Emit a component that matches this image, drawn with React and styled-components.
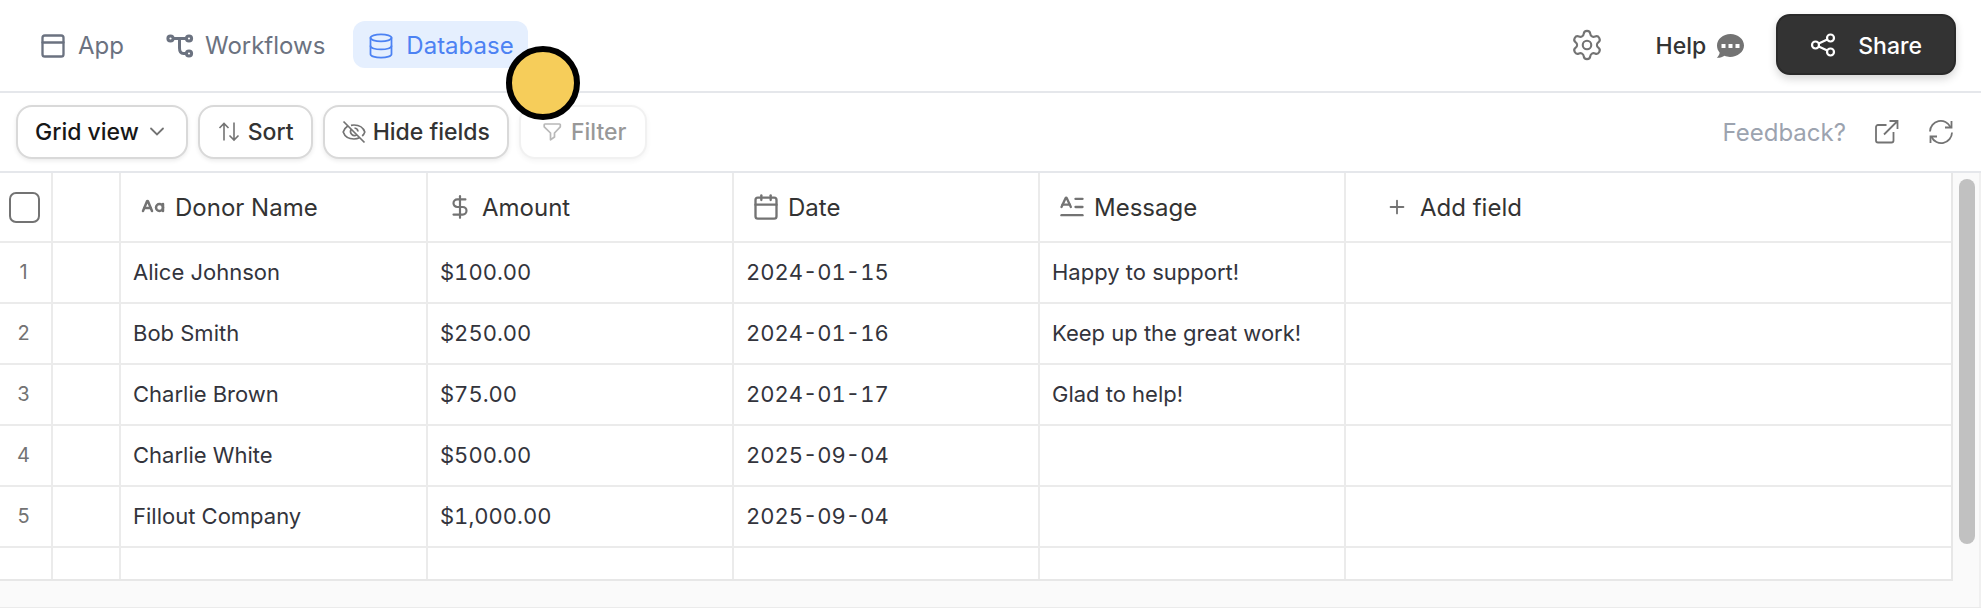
import React, { useState } from 'react';
import styled, { createGlobalStyle, css } from 'styled-components';
import {
  Calendar,
  CaseSensitive,
  Database,
  DollarSign,
  PanelTop,
  Plus,
  Settings,
  TextInitial,
} from 'lucide-react';

const donations = [
  { name: 'Alice Johnson', amount: '$100.00', date: '2024-01-15', message: 'Happy to support!' },
  { name: 'Bob Smith', amount: '$250.00', date: '2024-01-16', message: 'Keep up the great work!' },
  { name: 'Charlie Brown', amount: '$75.00', date: '2024-01-17', message: 'Glad to help!' },
  { name: 'Charlie White', amount: '$500.00', date: '2025-09-04', message: '' },
  { name: 'Fillout Company', amount: '$1,000.00', date: '2025-09-04', message: '' },
];

const fields = [
  { label: 'Donor Name', icon: <CaseSensitive size={24} strokeWidth={2.5} /> },
  { label: 'Amount', icon: <DollarSign size={26} strokeWidth={2} /> },
  { label: 'Date', icon: <Calendar size={28} strokeWidth={2} /> },
  { label: 'Message', icon: <TextInitial size={28} strokeWidth={2} /> },
];

export default function App() {
  const [allSelected, setAllSelected] = useState(false);

  return (
    <Page>
      <GlobalStyle />
      <Header>
        <Tabs>
          <Tab href="#app">
            <PanelTop size={28} strokeWidth={2} />
            App
          </Tab>
          <Tab href="#workflows">
            <WorkflowIcon />
            Workflows
          </Tab>
          <Tab href="#database" $active aria-current="page">
            <Database size={28} strokeWidth={1.5} />
            Database
            <Pointer />
          </Tab>
        </Tabs>
        <HeaderActions>
          <IconButton aria-label="Settings">
            <Settings size={34} strokeWidth={1.5} />
          </IconButton>
          <HelpButton>
            Help
            <ChatIcon />
          </HelpButton>
          <ShareButton>
            <ShareIcon />
            Share
          </ShareButton>
        </HeaderActions>
      </Header>

      <Toolbar>
        <ToolGroup>
          <ToolButton $strong>
            Grid view
            <ChevronIcon />
          </ToolButton>
          <ToolButton>
            <SortIcon />
            Sort
          </ToolButton>
          <ToolButton>
            <HideIcon />
            Hide fields
          </ToolButton>
          <ToolButton disabled>
            <FilterIcon />
            Filter
          </ToolButton>
        </ToolGroup>
        <ToolLinks>
          <FeedbackLink href="#feedback">Feedback?</FeedbackLink>
          <IconButton aria-label="Open in new tab">
            <ExternalIcon />
          </IconButton>
          <IconButton aria-label="Refresh">
            <RefreshIcon />
          </IconButton>
        </ToolLinks>
      </Toolbar>

      <GridArea>
        <Table>
          <colgroup>
            <Col $width={53} />
            <Col $width={68} />
            <Col $width={307} />
            <Col $width={306} />
            <Col $width={306} />
            <Col $width={306} />
            <Col />
          </colgroup>
          <thead>
            <HeadRow>
              <HeadCell>
                <Checkbox
                  type="checkbox"
                  aria-label="Select all rows"
                  checked={allSelected}
                  onChange={() => setAllSelected(!allSelected)}
                />
              </HeadCell>
              <HeadCell />
              {fields.map((field) => (
                <HeadCell key={field.label} scope="col">
                  <FieldLabel>
                    <FieldIcon>{field.icon}</FieldIcon>
                    {field.label}
                  </FieldLabel>
                </HeadCell>
              ))}
              <HeadCell>
                <AddField>
                  <Plus size={22} strokeWidth={2} />
                  Add field
                </AddField>
              </HeadCell>
            </HeadRow>
          </thead>
          <tbody>
            {donations.map((row, index) => (
              <Row key={row.name}>
                <NumberCell>{index + 1}</NumberCell>
                <Cell />
                <Cell>{row.name}</Cell>
                <Cell $tabular>{row.amount}</Cell>
                <Cell $tabular>{row.date}</Cell>
                <Cell>{row.message}</Cell>
                <Cell />
              </Row>
            ))}
            <FillerRow>
              <Cell />
              <Cell />
              <Cell />
              <Cell />
              <Cell />
              <Cell />
              <Cell />
            </FillerRow>
          </tbody>
        </Table>
        <ScrollTrack>
          <ScrollThumb />
        </ScrollTrack>
      </GridArea>
    </Page>
  );
}

function WorkflowIcon() {
  return (
    <svg width="28" height="28" viewBox="0 0 28 28" fill="none" stroke="currentColor" strokeWidth="3">
      <circle cx="4.5" cy="6.5" r="2.6" />
      <circle cx="23" cy="6.5" r="2.6" />
      <circle cx="23" cy="21.5" r="2.6" />
      <path d="M7 6.5h13.500M13.500 6.500v9.500c0 3.500 1.500 5.500 4 5.500h2.500" />
    </svg>
  );
}

function ChatIcon() {
  return (
    <svg width="28" height="26" viewBox="0 0 28 26">
      <path
        fill="#737373"
        d="M14.500 1C7 1 1 6.200 1 12.500c0 2.800 1 5.200 2.700 7.200C3.300 21.800 2.200 23.500.8 24.800c3 .2 5.700-.7 7.700-2 1.700.7 3.500 1.200 5.500 1.200 7.500 0 14-5.200 14-11.500S22 1 14.500 1z"
      />
      <path fill="#fff" d="M5.500 11h4v4h-4zM12.500 11h4v4h-4zM19.500 11h4v4h-4z" />
    </svg>
  );
}

function ShareIcon() {
  return (
    <svg width="26" height="26" viewBox="0 0 26 26" fill="none" stroke="currentColor" strokeWidth="2.2">
      <circle cx="5.5" cy="12" r="3.5" />
      <circle cx="20.5" cy="5" r="3.5" />
      <circle cx="20.5" cy="19" r="3.5" />
      <path d="M8.700 10.500l8.600-4M8.700 13.500l8.600 4" />
    </svg>
  );
}

function ChevronIcon() {
  return (
    <svg width="24" height="24" viewBox="0 0 24 24" fill="none" stroke="#737373" strokeWidth="1.8" strokeLinecap="round">
      <path d="M6 8.500l6 6 6-6" />
    </svg>
  );
}

function SortIcon() {
  return (
    <svg width="24" height="24" viewBox="0 0 24 24" fill="none" stroke="#737373" strokeWidth="1.6">
      <path d="M7 20.500V3.500M2.500 8L7 3.500 11.500 8M17 2.500v17.500M12.500 15.500l4.500 4.500 4.500-4.500" />
    </svg>
  );
}

function HideIcon() {
  return (
    <svg width="24" height="24" viewBox="0 0 24 24" fill="none" stroke="#737373" strokeWidth="1.7">
      <path d="M1.500 1.500l21 21" />
      <path d="M5.800 6C3.500 7.500 1.800 9.500 1.200 12c1.500 4.300 5.800 7 10.800 7 2 0 3.800-.4 5.400-1.200" />
      <path d="M9 5.300c1-.2 2-.3 3-.3 5 0 9.300 2.700 10.800 7-.5 1.500-1.400 2.900-2.600 4" />
      <path d="M9.300 9.300a4 4 0 0 0 5.500 5.600M12.500 8a4 4 0 0 1 3.500 3.500" />
    </svg>
  );
}

function FilterIcon() {
  return (
    <svg width="24" height="24" viewBox="0 0 24 24" fill="none" stroke="#737373" strokeWidth="1.7" strokeLinejoin="round">
      <path d="M5 4h14.500a.8.8 0 0 1 .8.800v2L14.500 13v4L10.500 19.800V13L4.200 6.800v-2A.8.8 0 0 1 5 4z" />
    </svg>
  );
}

function ExternalIcon() {
  return (
    <svg width="26" height="26" viewBox="0 0 26 26" fill="none" stroke="currentColor" strokeWidth="1.8">
      <path d="M12.500 6H4a2 2 0 0 0-2 2v13.500a2 2 0 0 0 2 2h13.500a2 2 0 0 0 2-2V13" />
      <path d="M15.500 2H23.500V10M23.500 2L10 15.500" />
    </svg>
  );
}

function RefreshIcon() {
  return (
    <svg width="26" height="26" viewBox="0 0 26 26" fill="none" stroke="currentColor" strokeWidth="1.8">
      <path d="M2 12.500A10.800 10.800 0 0 1 22.500 8M24 13.500A10.800 10.800 0 0 1 3.500 18" />
      <path d="M23.500 2v6.500H17M2.500 24v-6.500H9" />
    </svg>
  );
}

const GlobalStyle = createGlobalStyle`
  * {
    box-sizing: border-box;
  }

  body {
    margin: 0;
    background: #fff;
    font-family: Inter, 'Liberation Sans', sans-serif;
    color: #333;
  }

  button {
    font-family: inherit;
    cursor: pointer;
  }

  svg {
    flex-shrink: 0;
  }
`;

const Page = styled.div`
  display: flex;
  flex-direction: column;
  height: 100vh;
  border-bottom: 1px solid #ebebeb;
`;

const Header = styled.header`
  display: flex;
  justify-content: space-between;
  align-items: center;
  height: 93px;
  padding: 0 25px 2px;
  border-bottom: 2px solid #e5e7eb;
`;

const Tabs = styled.nav`
  display: flex;
  align-items: center;
  gap: 14px;
`;

const Tab = styled.a`
  position: relative;
  display: flex;
  align-items: center;
  gap: 11px;
  height: 47px;
  padding: 2px 14px 0;
  border-radius: 12px;
  font-size: 24px;
  color: #6b7280;
  text-decoration: none;

  ${({ $active }) => $active && css`
    background: #e5effe;
    color: #4c82f3;
  `}
`;

// tutorial marker that floats over the corner of the current tab
const Pointer = styled.span`
  position: absolute;
  right: -52px;
  bottom: -52px;
  z-index: 1;
  width: 74px;
  height: 74px;
  border: 6px solid #000;
  border-radius: 50%;
  background: #f6cd5a;
`;

const HeaderActions = styled.div`
  display: flex;
  align-items: center;
`;

const IconButton = styled.button`
  display: flex;
  padding: 0;
  border: 0;
  background: none;
  color: #737373;
`;

const HelpButton = styled.button`
  display: flex;
  align-items: center;
  gap: 10px;
  margin: 0 32px 0 52px;
  padding: 2px 0 0;
  border: 0;
  background: none;
  font-size: 23px;
  font-weight: 500;
  color: #333;
`;

const ShareButton = styled.button`
  display: flex;
  align-items: center;
  gap: 22px;
  height: 61px;
  padding: 2px 32px 0;
  border: 2px solid #2a2a2a;
  border-radius: 14px;
  background: #333;
  box-shadow: 0 4px 8px rgba(0, 0, 0, 0.16);
  font-size: 23px;
  font-weight: 500;
  color: #fff;
`;

const Toolbar = styled.div`
  display: flex;
  justify-content: space-between;
  align-items: center;
  height: 80px;
  padding: 0 27px 0 16px;
  border-bottom: 2px solid #e5e7eb;
`;

const ToolGroup = styled.div`
  display: flex;
  gap: 10px;
`;

const ToolButton = styled.button`
  display: flex;
  align-items: center;
  gap: ${({ $strong }) => ($strong ? 6 : 7)}px;
  height: 54px;
  padding: 0 17px;
  border: 2px solid #d9d9d9;
  border-radius: 16px;
  background: #fff;
  box-shadow: 0 2px 4px rgba(0, 0, 0, 0.08);
  font-size: 23px;
  font-weight: 500;
  color: ${({ $strong }) => ($strong ? '#171717' : '#333')};

  &:disabled {
    padding: 0 19px;
    opacity: 0.5;
    border-color: #e5e5e5;
    cursor: default;
  }
`;

const ToolLinks = styled.div`
  display: flex;
  align-items: center;
  gap: 28px;
`;

const FeedbackLink = styled.a`
  font-size: 24px;
  color: #9ca3af;
  text-decoration: none;
`;

const GridArea = styled.main`
  display: flex;
  flex: 1;
  min-height: 0;
  padding-bottom: 26px;
  border-right: 2px solid #f0f0f0;
  background: #fafafa;
`;

const Table = styled.table`
  flex: 1;
  table-layout: fixed;
  border-collapse: separate;
  border-spacing: 0;
  border-right: 2px solid #e7e7e7;
  border-bottom: 2px solid #e7e7e7;
  background: #fff;
`;

const Col = styled.col`
  width: ${({ $width }) => ($width ? `${$width}px` : 'auto')};
`;

const HeadRow = styled.tr`
  height: 70px;
`;

const Row = styled.tr`
  height: 61px;
`;

const FillerRow = styled.tr`
  td {
    border-bottom: 0;
  }
`;

const cellBorders = css`
  border-right: 2px solid #ebebeb;
  border-bottom: 2px solid #ebebeb;

  &:last-child {
    border-right: 0;
  }
`;

const HeadCell = styled.th`
  ${cellBorders}
  padding: 0;
  font-weight: 400;
  text-align: left;
`;

const Cell = styled.td`
  ${cellBorders}
  padding: 0 12px 2px;
  font-size: 22px;
  color: #33343c;
  white-space: nowrap;
  font-variant-numeric: ${({ $tabular }) => ($tabular ? 'tabular-nums' : 'normal')};
`;

const NumberCell = styled(Cell)`
  padding: 0 4px 2px 0;
  font-size: 20px;
  color: #737373;
  text-align: center;
`;

const Checkbox = styled.input`
  display: block;
  appearance: none;
  width: 31px;
  height: 31px;
  margin: 0 0 0 9px;
  border: 2px solid #737373;
  border-radius: 7px;
  background: #fff;

  &:checked {
    background: #4c82f3;
  }
`;

const FieldLabel = styled.div`
  display: flex;
  align-items: center;
  gap: 8px;
  padding-left: 18px;
  font-size: 24px;
  color: #333;
`;

const FieldIcon = styled.span`
  display: flex;
  justify-content: center;
  width: 28px;
  color: #737373;
`;

const AddField = styled.button`
  display: flex;
  align-items: center;
  gap: 12px;
  padding: 0 0 0 40px;
  border: 0;
  background: none;
  font-size: 24px;
  color: #333;

  svg {
    color: #737373;
  }
`;

const ScrollTrack = styled.div`
  width: 26px;
  padding: 6px 4px 9px 6px;
`;

const ScrollThumb = styled.div`
  width: 16px;
  height: 93%;
  border-radius: 8px;
  background: #c1c1c1;
`;
